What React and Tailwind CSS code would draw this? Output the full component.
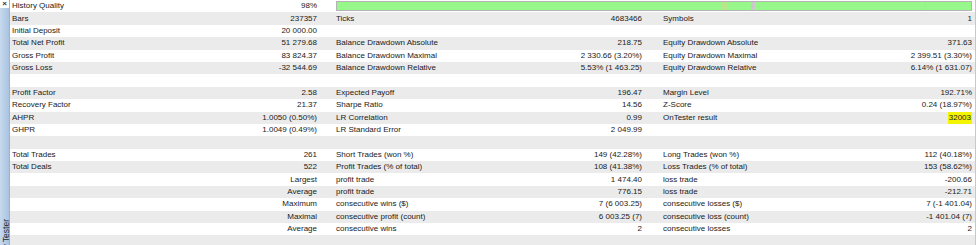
import React from 'react';

// rows of the tester report: [label, value, label, value, label, value]
const rows = [
  ['History Quality', '98%', 'quality'],
  ['Bars', '237357', 'Ticks', '4683466', 'Symbols', '1'],
  ['Initial Deposit', '20 000.00'],
  ['Total Net Profit', '51 279.68', 'Balance Drawdown Absolute', '218.75', 'Equity Drawdown Absolute', '371.63'],
  ['Gross Profit', '83 824.37', 'Balance Drawdown Maximal', '2 330.66 (3.20%)', 'Equity Drawdown Maximal', '2 399.51 (3.30%)'],
  ['Gross Loss', '-32 544.69', 'Balance Drawdown Relative', '5.53% (1 463.25)', 'Equity Drawdown Relative', '6.14% (1 631.07)'],
  [],
  ['Profit Factor', '2.58', 'Expected Payoff', '196.47', 'Margin Level', '192.71%'],
  ['Recovery Factor', '21.37', 'Sharpe Ratio', '14.56', 'Z-Score', '0.24 (18.97%)'],
  ['AHPR', '1.0050 (0.50%)', 'LR Correlation', '0.99', 'OnTester result', '32003'],
  ['GHPR', '1.0049 (0.49%)', 'LR Standard Error', '2 049.99'],
  [],
  ['Total Trades', '261', 'Short Trades (won %)', '149 (42.28%)', 'Long Trades (won %)', '112 (40.18%)'],
  ['Total Deals', '522', 'Profit Trades (% of total)', '108 (41.38%)', 'Loss Trades (% of total)', '153 (58.62%)'],
  ['', 'Largest', 'profit trade', '1 474.40', 'loss trade', '-200.66'],
  ['', 'Average', 'profit trade', '776.15', 'loss trade', '-212.71'],
  ['', 'Maximum', 'consecutive wins ($)', '7 (6 003.25)', 'consecutive losses ($)', '7 (-1 401.04)'],
  ['', 'Maximal', 'consecutive profit (count)', '6 003.25 (7)', 'consecutive loss (count)', '-1 401.04 (7)'],
  ['', 'Average', 'consecutive wins', '2', 'consecutive losses', '2'],
  [],
];

const QualityBar = () => (
  <div className="col-span-2 flex items-center h-full pl-[14px] pr-[3px]">
    <div className="flex h-[10px] w-full border border-[#b4b4b4] bg-[#98f78a]">
      <div className="w-[385px]" />
      <div className="w-[5px] bg-[#b8e68a]" />
      <div className="w-[24px]" />
      <div className="w-[4px] bg-[#c9c9c9]" />
      <div className="w-[170px]" />
      <div className="w-[1px] bg-[#c9c9c9]" />
    </div>
  </div>
);

const Cell = ({ label, value, labelPad, valuePad, highlight }) => (
  <div className={`flex items-center justify-between h-full ${labelPad} ${valuePad}`}>
    <span className="whitespace-nowrap">{label}</span>
    <span className={`whitespace-nowrap ${highlight ? 'bg-[#f4f400] px-[1px]' : ''}`}>{value}</span>
  </div>
);

export default function App() {
  return (
    <div
      className="flex w-[976px] h-[245px] overflow-hidden bg-white text-[#1a1a1a] text-[8px]"
      style={{ fontFamily: '"Liberation Sans", Arial, sans-serif' }}
    >
      {/* side dock strip */}
      <div className="relative w-[10px] shrink-0 flex flex-col border-r border-[#9fb3c8]">
        <div className="h-[8px] bg-white flex items-start justify-center text-[8px] leading-[7px] font-bold text-[#333]">
          ×
        </div>
        <div className="flex-1 bg-gradient-to-r from-[#c6d9ee] to-[#a9c3e0] relative">
          <span
            className="absolute left-[0px] top-[211px] origin-top-left whitespace-nowrap text-[8.5px] text-[#2a2a2a]"
            style={{ transform: 'rotate(-90deg) translateX(-100%)' }}
          >
            Strategy Tester
          </span>
        </div>
      </div>

      <div className="flex-1 flex flex-col border-r border-[#c8c8c8]">
        {rows.map((r, idx) => (
          <div
            key={idx}
            className={`grid grid-cols-[312px_326px_1fr] h-[12.4px] shrink-0 ${idx % 2 === 1 ? 'bg-[#ebebeb]' : 'bg-white'}`}
          >
            <Cell label={r[0]} value={r[1]} labelPad="pl-[2px]" valuePad="pr-[5px]" />
            {r[2] === 'quality' ? (
              <QualityBar />
            ) : (
              <>
                <Cell label={r[2]} value={r[3]} labelPad="pl-[14px]" valuePad="pr-[6px]" />
                <Cell
                  label={r[4]}
                  value={r[5]}
                  labelPad="pl-[15px]"
                  valuePad="pr-[3px]"
                  highlight={r[4] === 'OnTester result'}
                />
              </>
            )}
          </div>
        ))}
      </div>
    </div>
  );
}
